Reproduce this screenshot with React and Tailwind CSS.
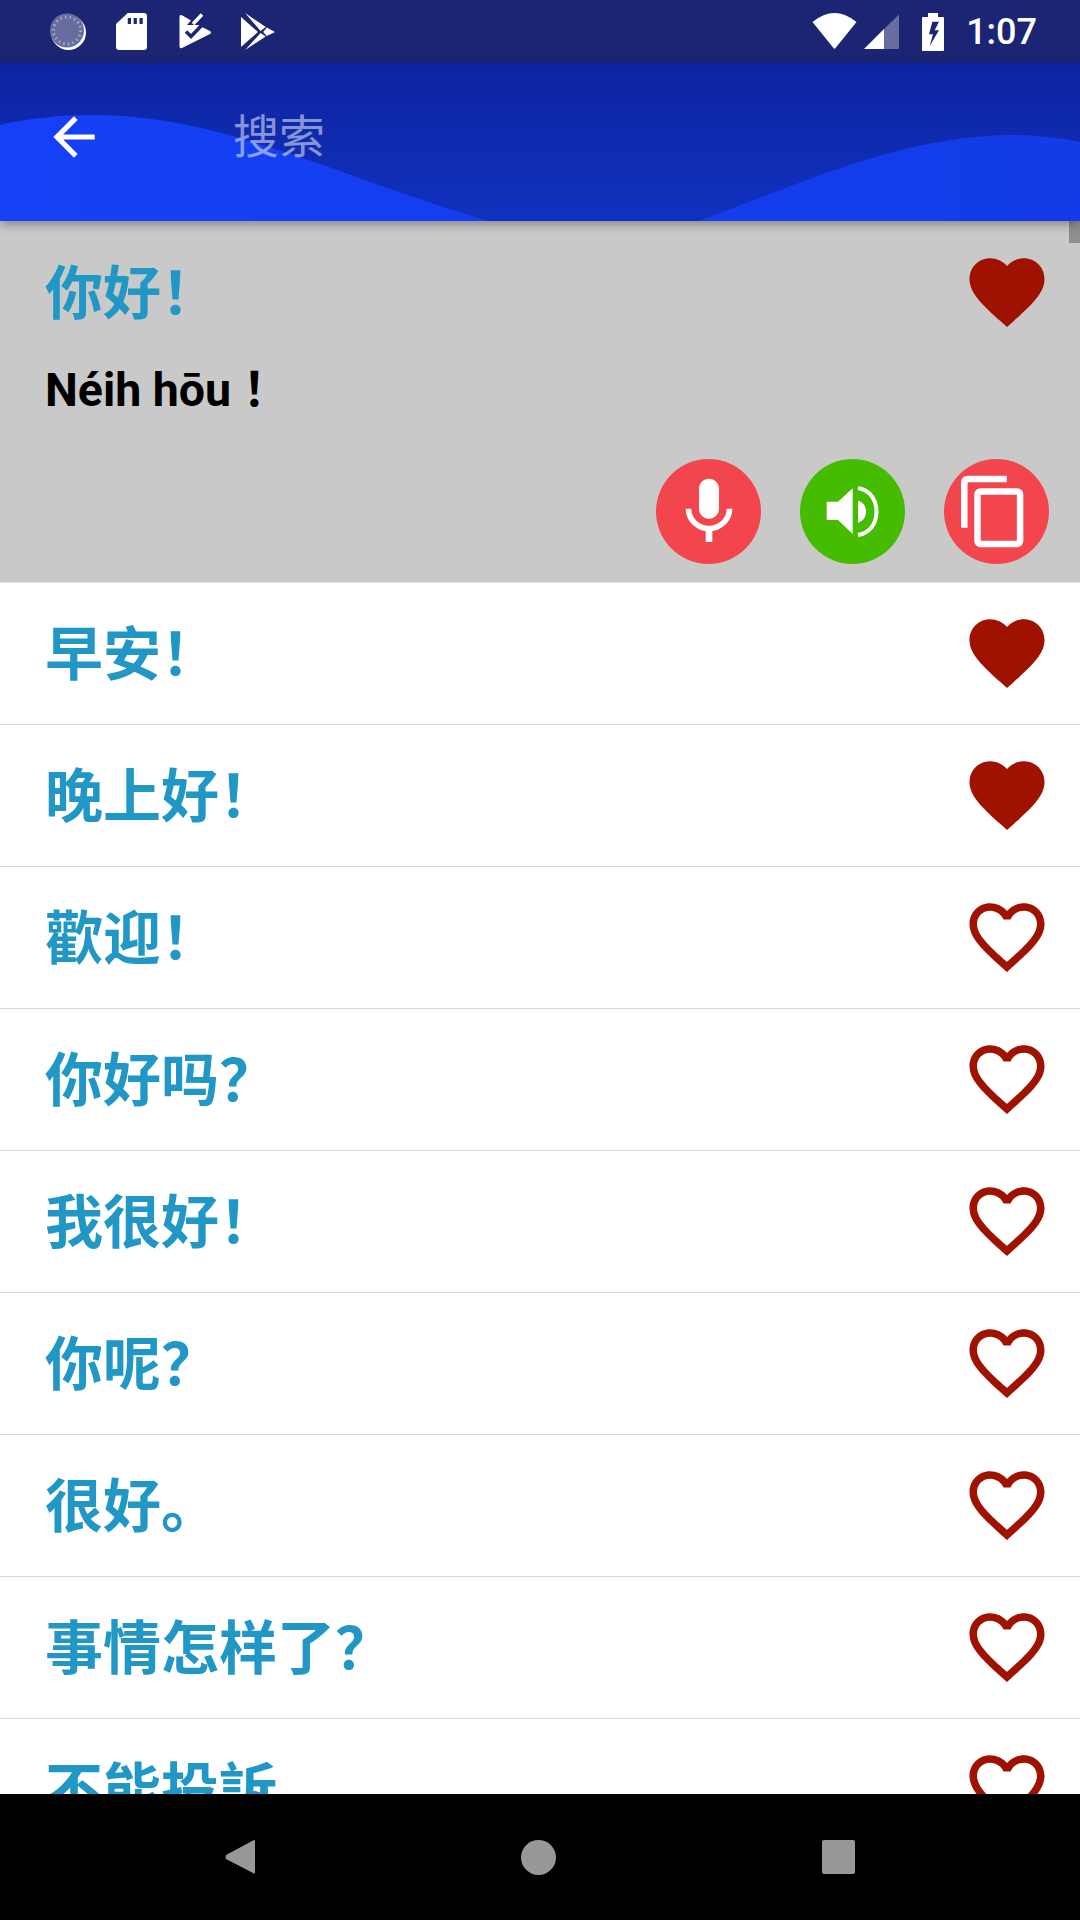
const PHRASES = [
  { text: "早安！", liked: true },
  { text: "晚上好！", liked: true },
  { text: "歡迎！", liked: false },
  { text: "你好吗？", liked: false },
  { text: "我很好！", liked: false },
  { text: "你呢？", liked: false },
  { text: "很好。", liked: false },
  { text: "事情怎样了？", liked: false },
  { text: "不能投訴", liked: false },
];

function Heart({ liked, className = "" }) {
  return (
    <svg className={`h-[90px] w-[90px] shrink-0 fill-[#a01200] ${className}`} viewBox="0 0 24 24">
      {liked ? (
        <path d="M12 21.35l-1.45-1.32C5.4 15.36 2 12.28 2 8.5 2 5.42 4.42 3 7.5 3c1.74 0 3.41.81 4.5 2.09C13.09 3.81 14.76 3 16.5 3 19.58 3 22 5.42 22 8.5c0 3.78-3.4 6.86-8.55 11.54L12 21.35z" />
      ) : (
        <path d="M16.5 3c-1.74 0-3.41.81-4.5 2.09C10.91 3.81 9.24 3 7.5 3 4.42 3 2 5.42 2 8.5c0 3.78 3.4 6.86 8.55 11.54L12 21.35l1.45-1.32C18.6 15.36 22 12.28 22 8.5 22 5.42 19.58 3 16.5 3zm-4.4 15.55l-.1.1-.1-.1C7.14 14.24 4 11.39 4 8.5 4 6.5 5.5 5 7.5 5c1.54 0 3.04.99 3.57 2.36h1.87C13.46 5.99 14.96 5 16.5 5c2 0 3.5 1.5 3.5 3.5 0 2.89-3.14 5.74-7.9 10.05z" />
      )}
    </svg>
  );
}

function StatusBar() {
  return (
    <div className="flex h-[63px] shrink-0 items-center bg-[#1c2574] pl-[49px] pr-[43px]">
      {/* sync spinner */}
      <svg className="h-[38px] w-[38px]" viewBox="0 0 38 38">
        <circle cx="19.5" cy="19.5" r="17.5" fill="#ffffff" />
        <circle cx="18" cy="17.5" r="17" fill="#686d9f" />
        <circle cx="18" cy="17.5" r="13.5" fill="none" stroke="#a9acc8" strokeWidth="3" strokeDasharray="1.4 3.3" />
      </svg>
      {/* sd card */}
      <svg className="ml-[29px] h-[37px] w-[31px]" viewBox="113 13 29 37" preserveAspectRatio="none">
        <path d="M124 13H139a3 3 0 0 1 3 3V47a3 3 0 0 1-3 3H116a3 3 0 0 1-3-3V24z" fill="#fff" />
        <path d="M124 18h3v6h-3zM129.5 18h3v6h-3zM135 18h3v6h-3z" fill="#1c2574" />
      </svg>
      {/* tasks */}
      <svg className="ml-[32px] h-[37px] w-[33px]" viewBox="179 13 33 37">
        <path d="M179.5 17Q179.5 14 182 15.3L191 20.5L187 25L198 25L210 31Q212 32.5 210 34L182 48Q179.5 49 179.5 46z" fill="#fff" />
        <path d="M186 31.5l5 5L203 24" fill="none" stroke="#1c2574" strokeWidth="3.5" />
        <path d="M193 24L202 14.5" fill="none" stroke="#fff" strokeWidth="3.5" />
      </svg>
      {/* play store */}
      <svg className="ml-[29px] h-[37px] w-[34px]" viewBox="233 13 33 37" preserveAspectRatio="none">
        <path d="M233 17V47L249.5 32zM237 13L257 27 252 31zM258 27.5L266 32 258 36 254.5 32zM237 50L252 33 257 36.5z" fill="#fff" />
      </svg>

      <div className="ml-auto flex items-center">
        {/* wifi */}
        <svg className="h-[37px] w-[45px]" viewBox="813 13 45 37">
          <path d="M813.5 22Q835.5 4 857.5 22L836.5 48Q835.5 49.5 834.5 48z" fill="#fff" />
        </svg>
        {/* signal */}
        <svg className="ml-[7px] h-[36px] w-[35px]" viewBox="865 14.5 35 36">
          <path d="M885 29.5L900 15V49.5H885z" fill="#686d9f" />
          <path d="M885 29.5L865 49.5H885z" fill="#fff" />
        </svg>
        {/* battery charging */}
        <svg className="ml-[23px] h-[38px] w-[22px]" viewBox="923 12 22 38">
          <path d="M929 12h10v4h5a1 1 0 0 1 1 1V49a1 1 0 0 1-1 1H924a1 1 0 0 1-1-1V17a1 1 0 0 1 1-1h5z" fill="#fff" />
          <path d="M933.3 20.7L930 33.3h4L930.7 45 940 29.3h-4.3L940 20.7z" fill="#1c2574" />
        </svg>
        <span className="ml-[22px] font-['Roboto',sans-serif] text-[36px] leading-none font-medium text-white">1:07</span>
      </div>
    </div>
  );
}

function Toolbar() {
  return (
    <div className="relative z-10 h-[158px] shrink-0 bg-gradient-to-b from-[#0e24a0] to-[#1031bf] shadow-[0_3px_10px_rgba(0,0,0,0.35)]">
      {/* wave */}
      <svg className="absolute inset-0 h-full w-full" viewBox="0 0 1080 158" preserveAspectRatio="none">
        <defs>
          <linearGradient id="wave" x1="0" x2="1" y1="0" y2="0">
            <stop offset="0" stopColor="#1540f5" />
            <stop offset="1" stopColor="#133ce8" />
          </linearGradient>
        </defs>
        <path
          d="M0 62C30 55 60 52 93 52C225 52 340 115 489 158H698C800 122 895 74 1010 72C1035 72 1060 75 1080 79V158H0z"
          fill="url(#wave)"
        />
      </svg>
      <div className="relative flex h-full items-center pb-[10px] pl-[43px]">
        <svg className="h-[62px] w-[62px] fill-white" viewBox="0 0 24 24">
          <path d="M20 11H7.83l5.59-5.59L12 4l-8 8 8 8 1.41-1.41L7.83 13H20v-2z" />
        </svg>
        <span className="ml-[128px] font-['Roboto','Noto_Sans_CJK_SC',sans-serif] text-[46px] leading-none text-white/50">搜索</span>
      </div>
    </div>
  );
}

function SelectedRow() {
  return (
    <div className="border-b border-[#e0e0e0] bg-[#c9c9c9] pt-[26px] pr-[28px] pb-[18px] pl-[45px]">
      <div className="flex items-start justify-between">
        <span className="h-[90px] pt-[2px] font-['Roboto','Noto_Sans_CJK_SC',sans-serif] text-[58px] leading-[90px] font-bold text-[#2097c5]">你好！</span>
        <Heart liked />
      </div>
      <div className="mt-[18px] h-[70px] font-['Roboto','Noto_Sans_CJK_SC',sans-serif] text-[46.5px] leading-[70px] font-bold text-black">Néih hōu ！</div>
      <div className="mt-[34px] flex justify-end gap-[39px] pr-[3px]">
        <button className="flex h-[105px] w-[105px] items-center justify-center rounded-full bg-[#f2454d]">
          <svg className="h-[80px] w-[80px] fill-white" viewBox="0 0 24 24">
            <path d="M12 14c1.66 0 2.99-1.34 2.99-3L15 5c0-1.66-1.34-3-3-3S9 3.34 9 5v6c0 1.66 1.34 3 3 3zm5.3-3c0 3-2.54 5.1-5.3 5.1S6.7 14 6.7 11H5c0 3.41 2.72 6.23 6 6.72V21h2v-3.28c3.28-.48 6-3.3 6-6.72h-1.7z" />
          </svg>
        </button>
        <button className="flex h-[105px] w-[105px] items-center justify-center rounded-full bg-[#46bc00]">
          <svg className="h-[105px] w-[105px]" viewBox="0 0 105 105">
            <path d="M26.7 42.7H38L52.7 29.3V75L38 61H26.7z" fill="#fff" />
            <path d="M58 41.7C63 43 66 47 66 52.7S63 62 58 63.7z" fill="#fff" />
            <path d="M58 29C70 31 76.5 41 76.5 52.7S70 74 58 76" fill="none" stroke="#fff" strokeWidth="4" />
          </svg>
        </button>
        <button className="flex h-[105px] w-[105px] items-center justify-center rounded-full bg-[#f2454d]">
          <svg className="h-[105px] w-[105px]" viewBox="0 0 105 105" fill="none" stroke="#fff" strokeWidth="6.5">
            <path d="M20.3 68.7V24Q20.3 20 24.3 20H62.7" />
            <rect x="33.5" y="32.5" width="42.6" height="52.6" rx="3" />
          </svg>
        </button>
      </div>
    </div>
  );
}

function Row({ text, liked }) {
  return (
    <div className="flex h-[142px] shrink-0 items-center justify-between border-b border-[#d8d8d8] pr-[28px] pl-[45px]">
      <span className="pt-[4px] font-['Roboto','Noto_Sans_CJK_SC',sans-serif] text-[58px] font-bold text-[#2097c5]">{text}</span>
      <Heart liked={liked} className="-mt-[2px]" />
    </div>
  );
}

function NavBar() {
  return (
    <div className="flex h-[126px] shrink-0 items-center justify-center gap-[266px] bg-black">
      <svg className="h-[36px] w-[30px]" viewBox="0 0 30 36">
        <path d="M29 1Q30 0 30 3V33Q30 36 28 34L1 20Q0 18 1 16z" fill="#989898" />
      </svg>
      <div className="h-[35px] w-[35px] rounded-full bg-[#989898]" />
      <div className="h-[34px] w-[33px] rounded-[2px] bg-[#989898]" />
    </div>
  );
}

export default function App() {
  return (
    <div className="flex h-[1920px] w-[1080px] flex-col overflow-hidden bg-white">
      <StatusBar />
      <Toolbar />
      <div className="relative flex-1 overflow-hidden">
        <SelectedRow />
        {PHRASES.map((p) => (
          <Row key={p.text} text={p.text} liked={p.liked} />
        ))}
        {/* scroll indicator */}
        <div className="absolute top-0 right-0 h-[22px] w-[11px] bg-[#8f8f8f]" />
      </div>
      <NavBar />
    </div>
  );
}
